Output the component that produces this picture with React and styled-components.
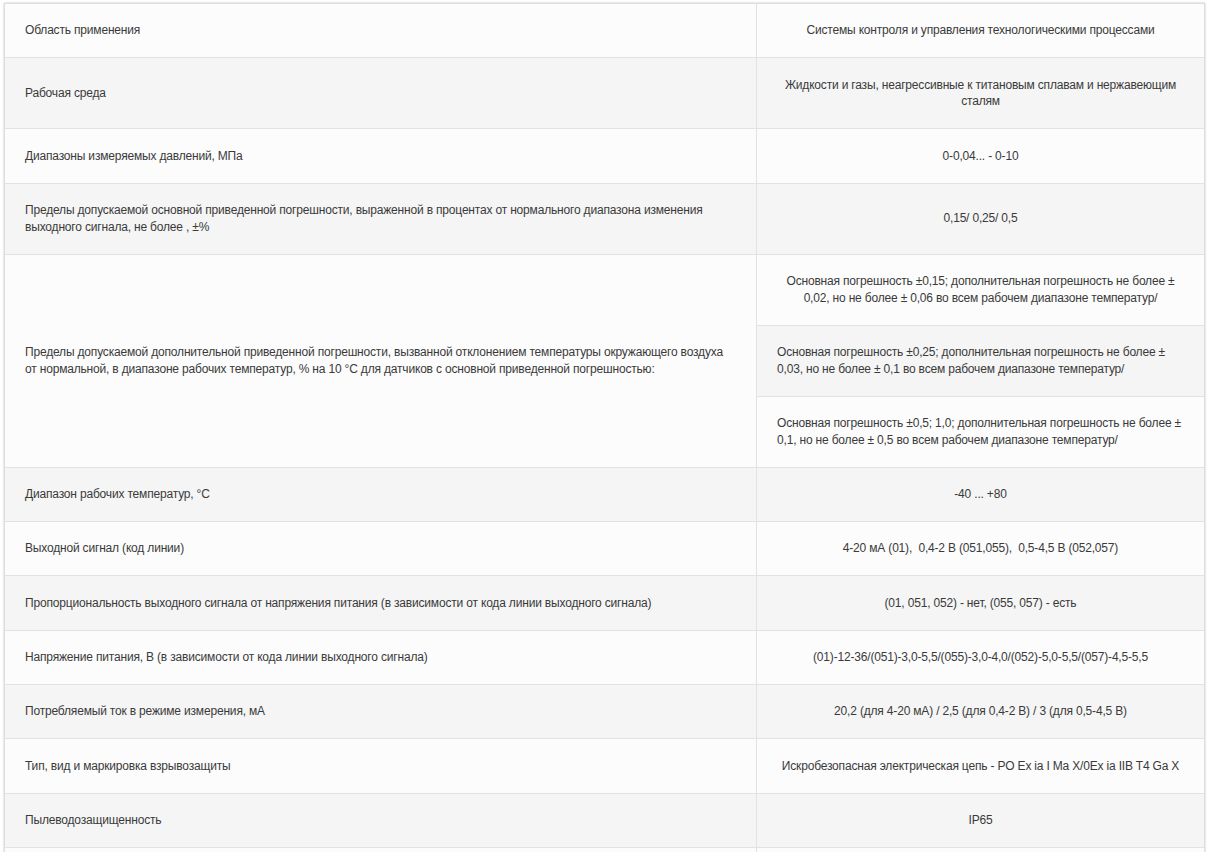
import React from "react";
import styled, { createGlobalStyle } from "styled-components";

const GlobalStyle = createGlobalStyle`
  html, body {
    margin: 0;
    padding: 0;
    background: #ffffff;
  }
  body {
    font-family: "Liberation Sans", Arial, sans-serif;
  }
`;

const specs = [
  { name: "Область применения", value: "Системы контроля и управления технологическими процессами" },
  { name: "Рабочая среда", value: "Жидкости и газы, неагрессивные к титановым сплавам и нержавеющим сталям" },
  { name: "Диапазоны измеряемых давлений, МПа", value: "0-0,04... - 0-10" },
  {
    name: "Пределы допускаемой основной приведенной погрешности, выраженной в процентах от нормального диапазона изменения выходного сигнала, не более , ±%",
    value: "0,15/ 0,25/ 0,5",
  },
  {
    name: "Пределы допускаемой дополнительной приведенной погрешности, вызванной отклонением температуры окружающего воздуха от нормальной, в диапазоне рабочих температур, % на 10 °С для датчиков с основной приведенной погрешностью:",
    values: [
      { text: "Основная погрешность ±0,15; дополнительная погрешность не более ± 0,02, но не более ± 0,06 во всем рабочем диапазоне температур/", align: "center" },
      { text: "Основная погрешность ±0,25; дополнительная погрешность не более ± 0,03, но не более ± 0,1 во всем рабочем диапазоне температур/", align: "left" },
      { text: "Основная погрешность ±0,5; 1,0; дополнительная погрешность не более ± 0,1, но не более ± 0,5 во всем рабочем диапазоне температур/", align: "left" },
    ],
  },
  { name: "Диапазон рабочих температур, °С", value: "-40 ... +80" },
  { name: "Выходной сигнал (код линии)", value: "4-20 мА (01),  0,4-2 В (051,055),  0,5-4,5 В (052,057)" },
  {
    name: "Пропорциональность выходного сигнала от напряжения питания (в зависимости от кода линии выходного сигнала)",
    value: "(01, 051, 052) - нет, (055, 057) - есть",
  },
  {
    name: "Напряжение питания, В (в зависимости от кода линии выходного сигнала)",
    value: "(01)-12-36/(051)-3,0-5,5/(055)-3,0-4,0/(052)-5,0-5,5/(057)-4,5-5,5",
  },
  { name: "Потребляемый ток в режиме измерения, мА", value: "20,2 (для 4-20 мА) / 2,5 (для 0,4-2 В) / 3 (для 0,5-4,5 В)" },
  { name: "Тип, вид и маркировка взрывозащиты", value: "Искробезопасная электрическая цепь - PO Ex ia I Ma X/0Ex ia IIB T4 Ga X" },
  { name: "Пылеводозащищенность", value: "IP65" },
  { name: "\u00a0", value: "\u00a0" },
];

const App = () => {
  let stripe = 0;
  const rows = [];

  specs.forEach((spec, i) => {
    if (spec.values) {
      const leftShade = stripe % 2 === 1;
      spec.values.forEach((v, j) => {
        const shade = (stripe + j) % 2 === 1;
        rows.push(
          <tr key={`${i}-${j}`}>
            {j === 0 && (
              <NameCell rowSpan={spec.values.length} $shade={leftShade}>
                {spec.name}
              </NameCell>
            )}
            <ValueCell $shade={shade} $align={v.align}>
              {v.text}
            </ValueCell>
          </tr>
        );
      });
      stripe += 1;
    } else {
      const shade = stripe % 2 === 1;
      rows.push(
        <tr key={i}>
          <NameCell $shade={shade}>{spec.name}</NameCell>
          <ValueCell $shade={shade}>{spec.value}</ValueCell>
        </tr>
      );
      stripe += 1;
    }
  });

  return (
    <>
      <GlobalStyle />
      <Page>
        <SpecTable>
          <colgroup>
            <col style={{ width: 752 }} />
            <col style={{ width: 448 }} />
          </colgroup>
          <tbody>{rows}</tbody>
        </SpecTable>
      </Page>
    </>
  );
};

const Page = styled.div`
  padding: 3px 4px 0 4px;
`;

const SpecTable = styled.table`
  width: 1200px;
  table-layout: fixed;
  border-collapse: collapse;
  border: 1px solid #dedede;
  box-shadow: 0 0 2px rgba(0, 0, 0, 0.25);
`;

const Cell = styled.td`
  padding: 18.4px 20px;
  font-size: 12px;
  line-height: 16.6px;
  letter-spacing: -0.18px;
  color: #3a3a3a;
  vertical-align: middle;
  border-bottom: 1px solid #e2e2e2;
  background: ${(p) => (p.$shade ? "#f5f5f5" : "#fcfcfc")};
`;

const NameCell = styled(Cell)`
  text-align: left;
  border-right: 1px solid #e2e2e2;
`;

const ValueCell = styled(Cell)`
  text-align: ${(p) => p.$align || "center"};
  white-space: pre-wrap;
`;

export default App;
